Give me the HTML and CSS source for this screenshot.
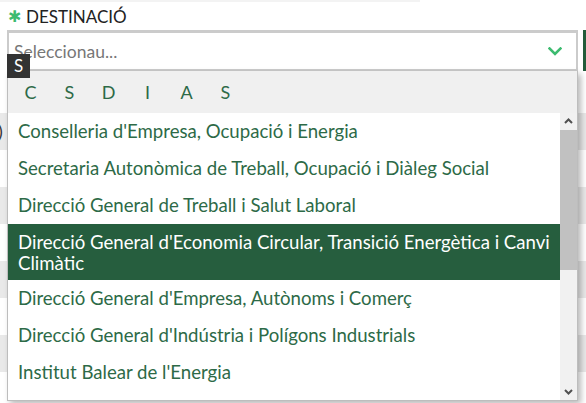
FILE: index.html
```html
<!DOCTYPE html>
<html lang="ca">
<head>
    <meta charset="UTF-8">
    <meta name="viewport" content="width=device-width, initial-scale=1.0">
    <title>Destinació</title>
    <link rel="stylesheet" href="styles.css">
</head>
<body>
  <div class="topline"></div>

  <div class="field">
    <label class="field-label"><span class="req">&#10033;</span>DESTINACIÓ</label>
    <div class="field-row">
      <div class="select-box">
        <span class="placeholder">Seleccionau...</span>
        <svg class="chevron" width="14" height="9" viewBox="0 0 14 9">
          <path d="M1.5 1.5 L7 7 L12.5 1.5" fill="none" stroke="#3dbb70" stroke-width="2.6" stroke-linecap="square"/>
        </svg>
      </div>
      <div class="side-btn"></div>
    </div>

    <!-- dropdown opened over the table -->
    <div class="dropdown">
      <div class="letters">
        <span>C</span><span>S</span><span>D</span><span>I</span><span>A</span><span>S</span>
      </div>
      <div class="list">
        <ul class="options">
          <li>Conselleria d'Empresa, Ocupació i Energia</li>
          <li>Secretaria Autonòmica de Treball, Ocupació i Diàleg Social</li>
          <li>Direcció General de Treball i Salut Laboral</li>
          <li class="active">Direcció General d'Economia Circular, Transició Energètica i Canvi Climàtic</li>
          <li>Direcció General d'Empresa, Autònoms i Comerç</li>
          <li>Direcció General d'Indústria i Polígons Industrials</li>
          <li>Institut Balear de l'Energia</li>
          <li>Servei d'Ocupació de les Illes Balears</li>
        </ul>
        <div class="scrollbar">
          <svg class="arrow" width="17" height="17" viewBox="0 0 17 17">
            <path d="M5 10 L8.5 6.5 L12 10" fill="none" stroke="#505050" stroke-width="2"/>
          </svg>
          <div class="track"><div class="thumb"></div></div>
          <svg class="arrow" width="17" height="17" viewBox="0 0 17 17">
            <path d="M5 7 L8.5 10.5 L12 7" fill="none" stroke="#505050" stroke-width="2"/>
          </svg>
        </div>
      </div>
    </div>
    <span class="badge">S</span>
  </div>

  <div class="behind">
    <div class="row grey">)</div>
    <div class="row"></div>
    <div class="row grey"></div>
    <div class="row"></div>
    <div class="row grey"></div>
    <div class="row"></div>
    <div class="row grey"></div>
    <div class="row"></div>
  </div>
</body>
</html>
```

FILE: styles.css
```css
body{
    margin: 0;
    font-family: Lato, "Open Sans", sans-serif;
    background: #fff;
    overflow: hidden;
}

.topline{
    height: 2px;
    width: 420px;
    background: #f3f3f3;
}

.field{
    position: relative;
    padding-left: 7px;
}

.field-label{
    display: block;
    height: 28px;
    line-height: 30px;
    font-size: 17px;
    color: #222;
}

.req{
    color: #3dbb70;
    font-size: 16px;
    margin: 0 5px 0 1px;
    position: relative;
    top: -1px;
}

.field-row{
    display: flex;
    gap: 5px;
}

.select-box{
    flex: none;
    width: 548px;
    height: 36px;
    border: 2px solid #cbcbcb;
    border-top-width: 3px;
    display: flex;
    align-items: center;
    justify-content: space-between;
    padding: 0 14px 0 5px;
    background: #fff;
}

.placeholder{
    font-size: 17.5px;
    color: #777;
}

.chevron{
    margin-top: 1px;
}

.side-btn{
    flex: none;
    width: 20px;
    height: 41px;
    background: #235c3a;
}

.dropdown{
    position: absolute;
    left: 7px;
    top: 69px;
    width: 569px;
    border: 1px solid #bdbdbd;
    border-top: 0;
    background: #fff;
    box-shadow: 3px 3px 6px rgba(0,0,0,0.28);
    z-index: 2;
}

.letters{
    display: flex;
    height: 42px;
    align-items: center;
    padding-left: 3px;
    background: #f0f0f0;
}

.letters span{
    width: 39px;
    text-align: center;
    font-size: 18px;
    color: #2d6a47;
}

.list{
    display: flex;
    height: 287px;
}

.options{
    flex: 1;
    list-style: none;
    margin: 0;
    padding: 0;
    overflow: hidden;
}

.options li{
    padding: 8px 2px 9px 10px;
    line-height: 20px;
    font-size: 18.6px;
    color: #2d6a47;
}

.options li.active{
    padding-bottom: 7px;
    line-height: 20.5px;
    background: #265e3e;
    color: #fff;
}

.scrollbar{
    width: 17px;
    display: flex;
    flex-direction: column;
    background: #f1f1f1;
}

.arrow{
    flex: none;
}

.track{
    flex: 1;
}

.thumb{
    height: 140px;
    background: #c1c1c1;
}

.badge{
    position: absolute;
    left: 7px;
    top: 52px;
    width: 23px;
    height: 24px;
    line-height: 24px;
    text-align: center;
    background: #333;
    color: #fff;
    font-size: 17px;
    z-index: 3;
}

.behind{
    margin-top: 42px;
}

.row{
    height: 37px;
    font-size: 18px;
    line-height: 37px;
    color: #333;
    text-indent: -2px;
}

.grey{
    background: #e9e9e9;
}
```
